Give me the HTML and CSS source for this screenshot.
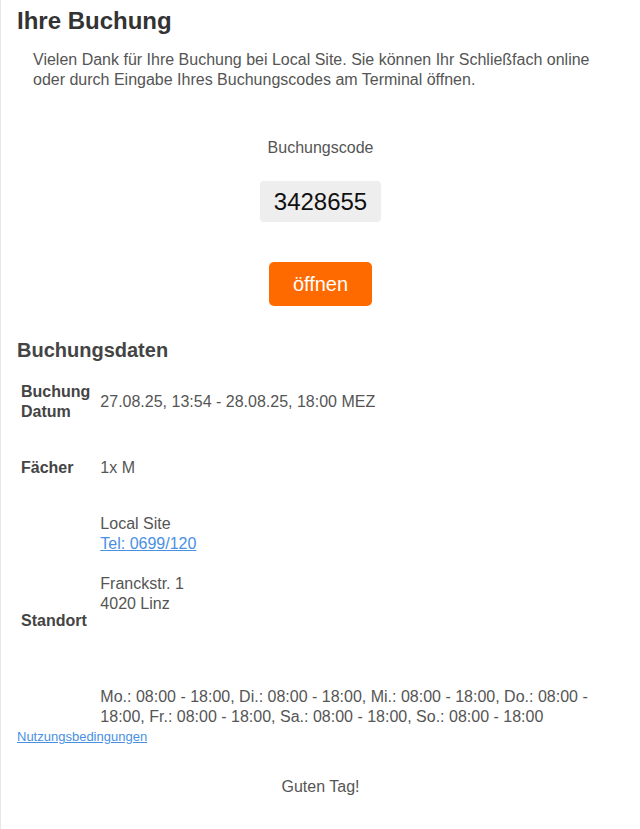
FILE: index.html
```html
<!DOCTYPE html>
<html lang="de">
<head>
<meta charset="utf-8">
<title>Ihre Buchung</title>
<link rel="stylesheet" href="styles.css">
</head>
<body>
<div class="page">
  <h1 class="title">Ihre Buchung</h1>
  <p class="intro">Vielen Dank für Ihre Buchung bei Local Site. Sie können Ihr Schließfach online oder durch Eingabe Ihres Buchungscodes am Terminal öffnen.</p>

  <div class="code-section">
    <div class="code-label">Buchungscode</div>
    <div class="code-box">3428655</div>
    <div class="open-row"><a class="open-btn" href="#">öffnen</a></div>
  </div>

  <h2 class="section-title">Buchungsdaten</h2>
  <table class="details">
    <tr>
      <td class="label">Buchung Datum</td>
      <td class="value">27.08.25, 13:54 - 28.08.25, 18:00 MEZ</td>
    </tr>
    <tr>
      <td class="label">Fächer</td>
      <td class="value">1x M</td>
    </tr>
    <tr class="last">
      <td class="label">Standort</td>
      <td class="value">
        <div class="address">Local Site<br><a class="link" href="#">Tel: 0699/120</a><br><br>Franckstr. 1<br>4020 Linz</div>
        <div class="hours">Mo.: 08:00 - 18:00, Di.: 08:00 - 18:00, Mi.: 08:00 - 18:00, Do.: 08:00 - 18:00, Fr.: 08:00 - 18:00, Sa.: 08:00 - 18:00, So.: 08:00 - 18:00</div>
      </td>
    </tr>
  </table>
  <a class="terms" href="#">Nutzungsbedingungen</a>

  <div class="greeting">Guten Tag!</div>
</div>
</body>
</html>
```
FILE: styles.css
```css
html, body {
  margin: 0;
  padding: 0;
  background: #fff;
}

body {
  font-family: "Liberation Sans", Arial, sans-serif;
  font-size: 16px;
  line-height: 1.25;
  color: #555;
}

.page {
  border-left: 1px solid #e8e8e8;
  padding: 0 16px;
  min-height: 829px;
  box-sizing: border-box;
}

.title {
  margin: 0;
  padding-top: 6px;
  margin-bottom: 14px;
  font-size: 24px;
  line-height: 30px;
  font-weight: bold;
  color: #333;
}

.intro {
  margin: 0 16px;
  line-height: 20px;
  color: #555;
}

.code-section {
  text-align: center;
  padding-top: 48px;
}

.code-label {
  line-height: 20px;
  color: #555;
}

.code-box {
  display: inline-block;
  margin-top: 23px;
  padding: 7px 14px 7px 14px;
  background: #eeeeee;
  border-radius: 4px;
  font-size: 24px;
  line-height: 27px;
  color: #111;
}

.open-row {
  margin-top: 40px;
}

.open-btn {
  display: inline-block;
  padding: 10px 24px;
  background: #ff6a00;
  color: #fff;
  border-radius: 5px;
  font-size: 20px;
  line-height: 24px;
  text-decoration: none;
}

.section-title {
  margin: 32px 0 1px;
  font-size: 20px;
  line-height: 25px;
  font-weight: bold;
  color: #444;
}

.details {
  width: 100%;
  border-collapse: collapse;
}

.details td {
  padding-top: 18px;
  padding-bottom: 18px;
  line-height: 20px;
}

.details .label {
  width: 1%;
  padding-left: 4px;
  padding-right: 9px;
  font-weight: bold;
  color: #444;
  vertical-align: middle;
}

.details .value {
  padding-left: 1px;
  padding-right: 4px;
  color: #555;
}

.details .last td {
  padding-bottom: 2px;
}

.link {
  color: #4a90e2;
  text-decoration: underline;
}

.hours {
  margin-top: 73px;
}

.terms {
  display: block;
  width: max-content;
  font-size: 13px;
  line-height: 16px;
  color: #4a90e2;
  text-decoration: underline;
}

.greeting {
  margin-top: 32px;
  text-align: center;
  line-height: 20px;
  color: #555;
}
```
